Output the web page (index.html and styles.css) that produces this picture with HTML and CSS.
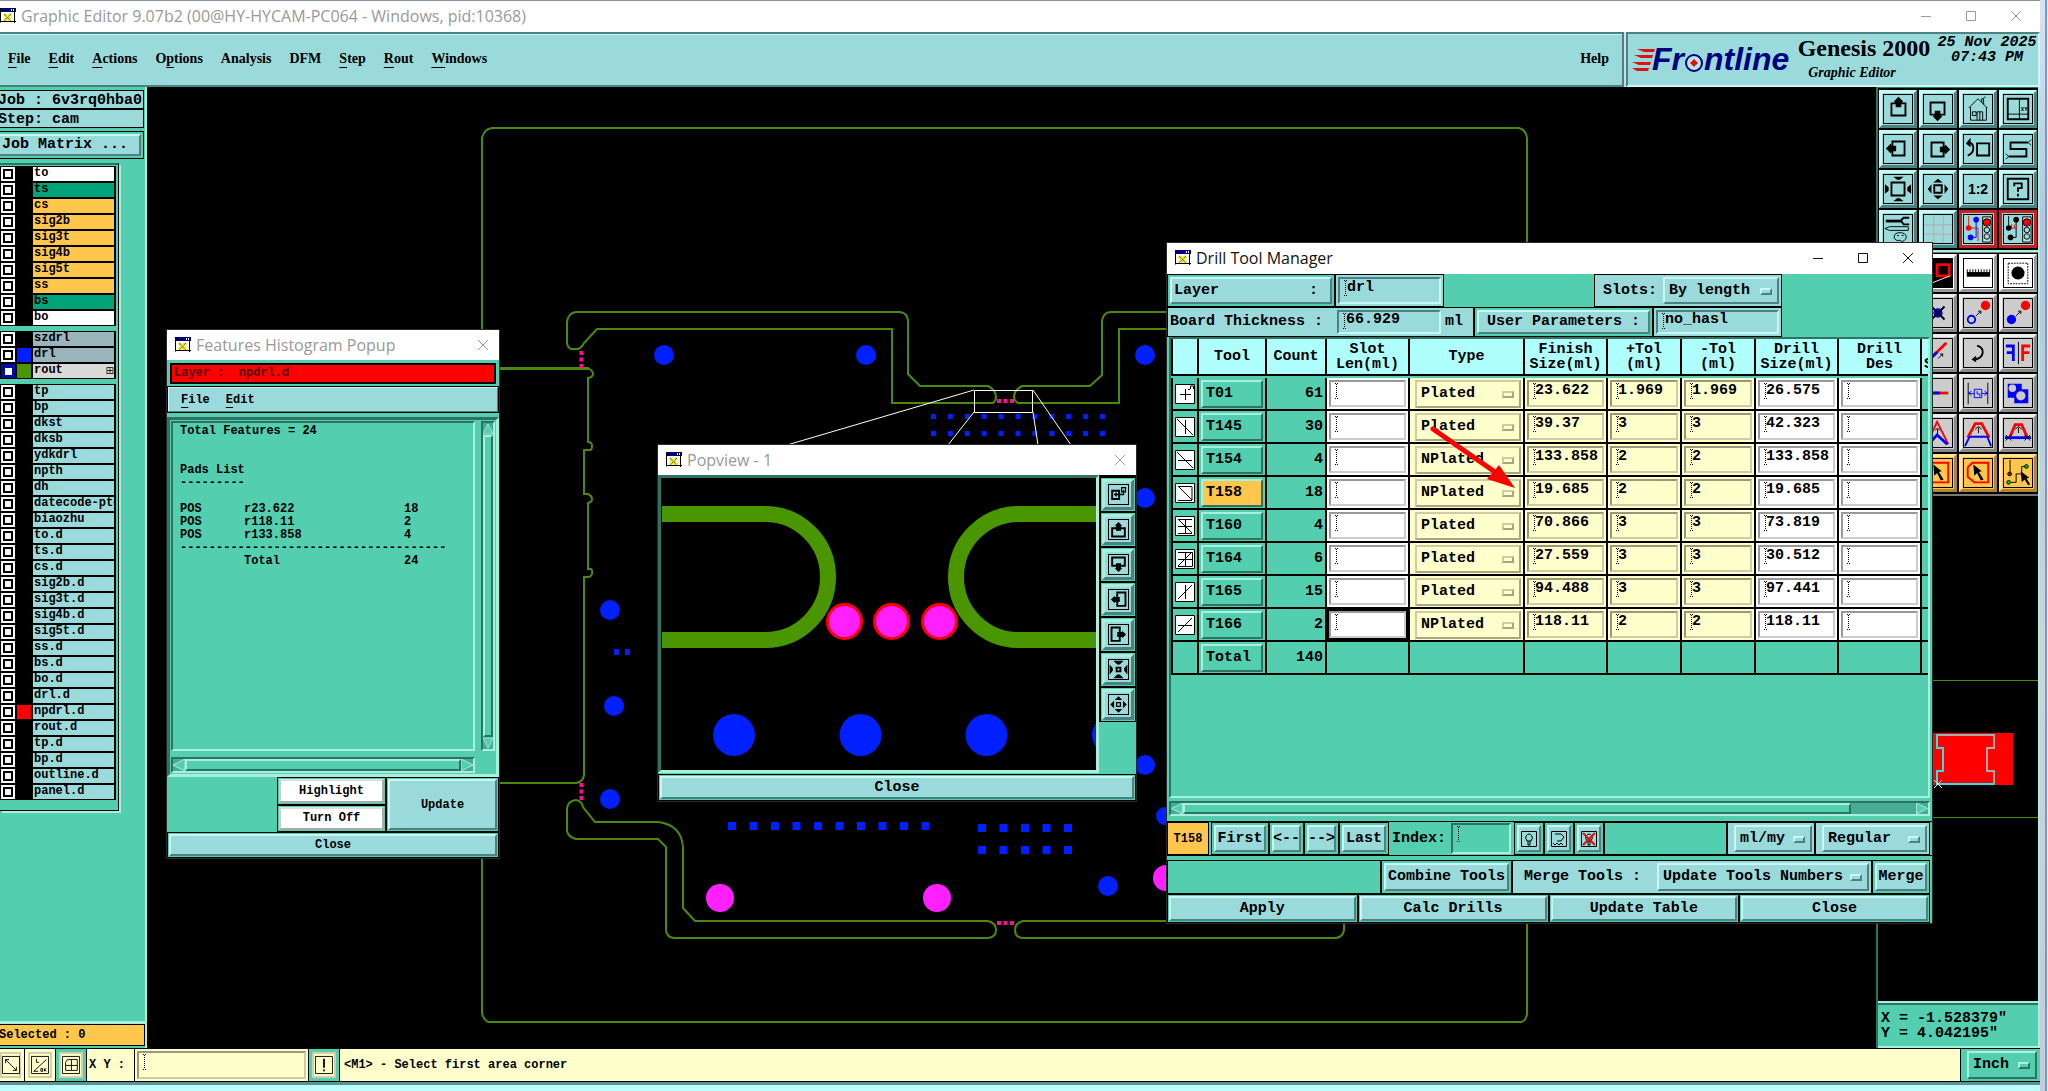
FILE: index.html
```html
<!DOCTYPE html>
<html lang="en">
<head>
<meta charset="utf-8">
<title>Graphic Editor 9.07b2</title>
<link rel="stylesheet" href="styles.css">
</head>
<body>
<svg class="defs" aria-hidden="true">
  <symbol id="win" viewBox="0 0 16 15"><path fill="#fff" d="M0 0h16v15H0z"/><path fill="#00007a" d="M0 0h16v4H0z"/><path d="M11 1h1v2h-1zM13 1h1v2h-1z" fill="#fff"/><path d="M4 6l7 7M11 6l-7 7" stroke="#e6e21a" stroke-width="3"/><path d="M4 6l7 7M11 6l-7 7" stroke="#444" stroke-dasharray="1 1"/><path d="M.5 0v14.500M14.500 0v15M0 13.500h16" fill="none" stroke="#000"/></symbol>
  <symbol id="x" viewBox="0 0 12 12"><path d="M1 1l10 10M11 1L1 11" stroke="currentColor" fill="none"/></symbol>
  <symbol id="min" viewBox="0 0 12 12"><path d="M1 6.500h10" stroke="currentColor"/></symbol>
  <symbol id="max" viewBox="0 0 12 12"><path d="M1.500 1.500h9v9h-9z" stroke="currentColor" fill="none"/></symbol>
  <symbol id="up" viewBox="0 0 30 30"><path d="M8 9h15v13H8z" fill="none" stroke="#000" stroke-width="2"/><path d="M15.500 2l5 5-1 1h-1v5h-6V8h-1l-1-1z"/></symbol>
  <symbol id="in4" viewBox="0 0 30 30"><path d="M10 2h11l-4 3h-3zM10 28h11l-4-3h-3zM1 10v10l4-3v-4zM29 10v10l-4-3v-4z"/></symbol>
  <symbol id="out4" viewBox="0 0 30 30"><path d="M15 4l5 4H10zM15 26l5-4H10zM4 15l4-5v10zM26 15l-4-5v10z"/></symbol>
  <symbol id="light" viewBox="0 0 30 30"><path d="M20 2h9v27h-9z" fill="#b8e4e4" stroke="#000"/><circle cx="24.500" cy="8" r="4" fill="#f00" stroke="#000"/><circle cx="24.500" cy="16" r="3" fill="#9bdada" stroke="#000"/><circle cx="24.500" cy="23" r="3" fill="#9bdada" stroke="#000"/></symbol>
  <symbol id="cur" viewBox="0 0 30 30"><path d="M10 6l9 7-3 1 5 8-3 1-4-8-3 3z"/></symbol>
</svg>

<header class="titlebar">
  <svg class="wi"><use href="#win"/></svg>
  <h1>Graphic Editor 9.07b2 (00@HY-HYCAM-PC064 - Windows, pid:10368)</h1>
  <div class="winctl"><button aria-label="Minimize"><svg><use href="#min"/></svg></button><button aria-label="Maximize"><svg><use href="#max"/></svg></button><button aria-label="Close window"><svg><use href="#x"/></svg></button></div>
</header>

<div class="top">
  <nav class="menubar">
    <a href="#"><u>F</u>ile</a><a href="#"><u>E</u>dit</a><a href="#"><u>A</u>ctions</a><a href="#">O<u>p</u>tions</a><a href="#">Analysis</a><a href="#">DFM</a><a href="#"><u>S</u>tep</a><a href="#"><u>R</u>out</a><a href="#"><u>W</u>indows</a>
    <a href="#" class="help">Help</a>
  </nav>
  <div class="brand">
    <svg class="logo" viewBox="0 0 164 34" role="img" aria-label="Frontline">
      <path d="M5 8h18l-1 3H12zM2 14h19l-1 3H9zM0 21h19l-1 3H7zM0 27h17l-1 3H5z" fill="#e01010"/>
      <text x="20" y="29" class="ft">Fr</text><text x="72" y="29" class="ft">ntline</text>
      <circle cx="62" cy="22" r="8" fill="#b4e8ea" stroke="#000080" stroke-width="2"/><path d="M62 18l4 4-4 4-4-4z" fill="#e01010"/>
    </svg>
    <div class="product"><strong>Genesis 2000</strong><em>Graphic Editor</em></div>
    <div class="clock">25 Nov 2025<br>07:43 PM</div>
  </div>
</div>

<main class="work">
  <aside class="left">
    <div class="job">Job : 6v3rq0hba0</div>
    <div class="job">Step: cam</div>
    <div class="jm"><button class="btn">Job Matrix ...</button></div>
    <div class="layers">
      <ul>
        <li class="w"><i></i><b></b><span>to</span></li><li class="g"><i></i><b></b><span>ts</span></li><li class="o"><i></i><b></b><span>cs</span></li><li class="o"><i></i><b></b><span>sig2b</span></li><li class="o"><i></i><b></b><span>sig3t</span></li><li class="o"><i></i><b></b><span>sig4b</span></li><li class="o"><i></i><b></b><span>sig5t</span></li><li class="o"><i></i><b></b><span>ss</span></li><li class="g"><i></i><b></b><span>bs</span></li><li class="w"><i></i><b></b><span>bo</span></li>
      </ul>
      <ul>
        <li class="s"><i></i><b></b><span>szdrl</span></li><li class="s"><i></i><b class="blue"></b><span>drl</span></li><li class="l"><i class="act"></i><b class="green"></b><span>rout<small>⊞</small></span></li>
      </ul>
      <ul>
        <li><i></i><b></b><span>tp</span></li><li><i></i><b></b><span>bp</span></li><li><i></i><b></b><span>dkst</span></li><li><i></i><b></b><span>dksb</span></li><li><i></i><b></b><span>ydkdrl</span></li><li><i></i><b></b><span>npth</span></li><li><i></i><b></b><span>dh</span></li><li><i></i><b></b><span>datecode-ptd</span></li><li><i></i><b></b><span>biaozhu</span></li><li><i></i><b></b><span>to.d</span></li><li><i></i><b></b><span>ts.d</span></li><li><i></i><b></b><span>cs.d</span></li><li><i></i><b></b><span>sig2b.d</span></li><li><i></i><b></b><span>sig3t.d</span></li><li><i></i><b></b><span>sig4b.d</span></li><li><i></i><b></b><span>sig5t.d</span></li><li><i></i><b></b><span>ss.d</span></li><li><i></i><b></b><span>bs.d</span></li><li><i></i><b></b><span>bo.d</span></li><li><i></i><b></b><span>drl.d</span></li><li><i></i><b class="red"></b><span>npdrl.d</span></li><li><i></i><b></b><span>rout.d</span></li><li><i></i><b></b><span>tp.d</span></li><li><i></i><b></b><span>bp.d</span></li><li><i></i><b></b><span>outline.d</span></li><li><i></i><b></b><span>panel.d</span></li>
      </ul>
    </div>
    <div class="selected">Selected : 0</div>
  </aside>

  <svg class="canvas" role="img" aria-label="Board drawing">
    <g transform="translate(-147 -87)">
      <g fill="none" stroke="#4a8a10" stroke-width="2">
        <path d="M482 138q2-9 10-10H1519q7 2 8 10V1014q-1 7-6 8H488q-5-3-6-9z"/>
        <path d="M567 342V322q1-9 9-10H900q7 1 8 8v54l12 12h68q8 4 8 11 0 4-3 6H892V329H597l-13 14q-3 6-7 6h-6q-4-2-4-7z"/>
        <path d="M1170 312h-60q-7 1-8 9v54l-12 11h-68q-8 4-8 11 0 4 4 6h101v-74h51"/>
        <path d="M588 368q5 3 5 6t-5 4v64q4 0 4 4t-2 4h-6v44h4q4 2 4 5t-4 4v66h3q2 2 1 5t-4 3h-4V775q-1 7-8 8h-76"/>
        <path d="M567 808q1-7 9-8 6 1 7 7l12 15h63q24 3 25 26v60l12 13h293q8 2 8 9t-8 8H674q-7-1-8-7v-84l-8-8h-82q-8-2-9-8z"/>
        <path d="M1170 921h-147q-8 2-8 9t7 8h314q7-1 8-8v-10"/>
        <path d="M495 368.500h94" stroke-width="3"/>
      </g>
      <g fill="#0020ff">
        <circle cx="664" cy="355" r="10"/><circle cx="866" cy="355" r="10"/><circle cx="1145" cy="355" r="10"/><circle cx="610" cy="610" r="10"/><circle cx="614" cy="706" r="10"/><circle cx="610" cy="799" r="10"/><circle cx="1145" cy="498" r="10"/><circle cx="1145" cy="765" r="10"/><circle cx="1165" cy="816" r="9"/><circle cx="1108" cy="886" r="10"/>
        <path d="M614 649h5v6h-5zM625 649h5v6h-5z"/>
      </g>
      <g stroke="#0020ff" fill="none">
        <path stroke-width="5" stroke-dasharray="5 11.900" d="M931 416.500h175M931 433.500h175"/>
        <path stroke-width="8" stroke-dasharray="8 13.500" d="M728 826h202"/>
        <path stroke-width="8" stroke-dasharray="8 13.500" d="M978 828h95M978 850h95"/>
      </g>
      <g fill="#ff20ff"><circle cx="720" cy="898" r="14"/><circle cx="937" cy="898" r="14"/><circle cx="1166" cy="878" r="13"/></g>
      <g fill="none" stroke="#ff1090" stroke-width="4" stroke-dasharray="4 2.500"><path d="M581.500 351v17M581.500 783v17M997 401h17M997 923h17"/></g>
      <g fill="none" stroke="#fff"><path d="M974.500 390.500h58v22h-58z"/><path d="M974 390L787 445M974 412l-26 33M1033 412l5 33M1033 390l38 55"/></g>
    </g>
  </svg>

  <aside class="right">
    <div class="tools view">
      <button aria-label="Pan up"><svg viewBox="0 0 30 30"><use href="#up"/></svg></button>
      <button aria-label="Pan down"><svg viewBox="0 0 30 30"><use href="#up" transform="rotate(180 15 15)"/></svg></button>
      <button aria-label="Home"><svg viewBox="0 0 30 30"><path d="M5 14L15 4l10 10M7 13v14h17V13M14 27v-9h6v9M17 18v9M9 18h4v4H9zM19 8V4h2v6M21 3l2-1" fill="none" stroke="#000"/></svg></button>
      <button aria-label="Coordinates"><svg viewBox="0 0 30 30"><path d="M4 4h22v22H4z" fill="none" stroke="#000" stroke-width="2"/><path d="M16.500 4v22M4 20.500h22" stroke="#000"/><text x="18" y="17" class="tiny">XY</text></svg></button>
      <button aria-label="Pan left"><svg viewBox="0 0 30 30"><use href="#up" transform="rotate(-90 15 15)"/></svg></button>
      <button aria-label="Pan right"><svg viewBox="0 0 30 30"><use href="#up" transform="rotate(90 15 15)"/></svg></button>
      <button aria-label="Previous view"><svg viewBox="0 0 30 30"><path d="M14 9h13v13H14zM4 8q6 0 6 6t-6 8" fill="none" stroke="#000" stroke-width="2"/><path d="M2 9l5-6v10z"/></svg></button>
      <button aria-label="Serpentine"><svg viewBox="0 0 30 30"><path d="M26 8H7v7h17v8H5" fill="none" stroke="#000" stroke-width="2"/><path d="M29 5l-3 3 3 3M2 20l3 3-3 3" fill="none" stroke="#000"/></svg></button>
      <button aria-label="Zoom in"><svg viewBox="0 0 30 30"><use href="#in4"/><path d="M8 8h14v14H8z" fill="none" stroke="#000" stroke-width="2"/></svg></button>
      <button aria-label="Zoom out"><svg viewBox="0 0 30 30"><use href="#out4"/><path d="M11 11h8v8h-8z" fill="none" stroke="#000" stroke-width="2"/></svg></button>
      <button class="ratio"><span>1:2</span></button>
      <button aria-label="Help on view"><svg viewBox="0 0 30 30"><path d="M4 4h22v22H4z" fill="none" stroke="#000" stroke-width="2"/><path d="M11 12V9h8v5h-4v4M15 20v3" fill="none" stroke="#000" stroke-width="2"/></svg></button>
      <button aria-label="Setup"><svg viewBox="0 0 30 30"><path d="M2 5h16v3H2z"/><path d="M27 3h-6l-3 3 3 4h6" fill="none" stroke="#000" stroke-width="2"/><path d="M6 12.500h20v4H6l-5-2z" fill="none" stroke="#000"/><path d="M11 25q-1-7 8-6 7 2 4 7-3 4-6 1-3 2-6-2zM14 22h2M19 22h2" fill="none" stroke="#000"/></svg></button>
      <button aria-label="Grid"><svg viewBox="0 0 30 30"><path d="M10.500 0v30M20.500 0v30M0 10.500h30M0 20.500h30" stroke="#c4a4a8"/></svg></button>
      <button class="hot" aria-label="Net on"><svg viewBox="0 0 30 30"><use href="#light"/><path d="M5 1v13h10v14" fill="none" stroke="#f00"/><path d="M13 4v20H7" fill="none" stroke="#00f"/><circle cx="5" cy="14" r="3" fill="#f00"/><g fill="#00f"><circle cx="13" cy="5" r="3"/><circle cx="7" cy="24" r="3"/></g></svg></button>
      <button class="hot" aria-label="Net off"><svg viewBox="0 0 30 30"><use href="#light"/><path d="M5 1v13M13 4v20H7" fill="none" stroke="#000"/><path d="M6 14h8M8 10v4M11 10v4" stroke="#f00"/><circle cx="5" cy="14" r="3"/><circle cx="13" cy="5" r="3"/><circle cx="7" cy="24" r="3"/></svg></button>
    </div>
    <div class="tools edit">
      <button class="white"></button>
      <button class="white" aria-label="Contrast"><svg viewBox="0 0 30 30"><path d="M0 0h30v30H0z"/><path d="M14 6h13v12H14z" fill="none" stroke="#f00" stroke-width="3"/><path d="M0 29l28-11" stroke="#fff"/><path d="M0 18h5v12H0z" fill="#00f"/></svg></button>
      <button class="white" aria-label="Ruler"><svg viewBox="0 0 30 30"><path d="M3 14h25v5H3z"/><path d="M3.500 11v4M6.500 11v4M9.500 11v4M12.500 11v4M15.500 11v4M18.500 11v4M21.500 11v4M24.500 11v4M27.500 11v4" stroke="#000"/></svg></button>
      <button class="white" aria-label="Select pad"><svg viewBox="0 0 30 30"><path d="M4.500 4.500h21v22h-21z" fill="none" stroke="#000" stroke-dasharray="2 1"/><circle cx="15" cy="15" r="7"/></svg></button>
      <button></button>
      <button aria-label="Delete"><svg viewBox="0 0 30 30"><circle cx="15" cy="15" r="5" fill="#00f"/><path d="M8 8l14 14M22 8L8 22" stroke="#000" stroke-width="2"/></svg></button>
      <button aria-label="Copy"><svg viewBox="0 0 30 30"><circle cx="8" cy="22" r="4" fill="none" stroke="#00f" stroke-width="2"/><circle cx="23" cy="7" r="5" fill="#f00"/><path d="M13 18l5-5M15 13h3v3" fill="none" stroke="#000"/></svg></button>
      <button aria-label="Move"><svg viewBox="0 0 30 30"><circle cx="8" cy="22" r="5" fill="#00f"/><circle cx="23" cy="7" r="5" fill="#f00"/><path d="M13 18l5-5M15 13h3v3" fill="none" stroke="#000"/></svg></button>
      <button></button>
      <button aria-label="Stretch"><svg viewBox="0 0 30 30"><path d="M10 18L24 4" stroke="#f00" stroke-width="3"/><path d="M4 24l10-10" stroke="#00f" stroke-width="3"/><path d="M15 21l5-5M17 16h3v3" fill="none" stroke="#000"/></svg></button>
      <button aria-label="Rotate"><svg viewBox="0 0 30 30"><path d="M14 7q7 2 6 8t-9 7" fill="none" stroke="#000" stroke-width="2"/><path d="M8 22l5-4v7z"/></svg></button>
      <button aria-label="Mirror"><svg viewBox="0 0 30 30"><path d="M2 7.500h8v16M3 14.500h7" fill="none" stroke="#00f" stroke-width="3"/><path d="M28 7.500h-8v16M27 14.500h-7" fill="none" stroke="#f00" stroke-width="3"/><path d="M15.500 3v24" stroke="#000"/></svg></button>
      <button></button>
      <button aria-label="Break line"><svg viewBox="0 0 30 30"><path d="M2 15h24" stroke="#f00" stroke-width="3"/><path d="M9 15h8" stroke="#00f" stroke-width="3"/></svg></button>
      <button aria-label="Spacing"><svg viewBox="0 0 30 30"><path d="M4.500 4v23M25.500 4v23" stroke="#000"/><path d="M11 11h8v9h-8zM5 15.500h6M19 15.500h6M8 13l-3 2 3 3M22 13l3 2-3 3M14 13v3h3v3" fill="none" stroke="#00f"/></svg></button>
      <button aria-label="Merge shapes"><svg viewBox="0 0 30 30"><path d="M4 5h15v6h7v15H11v-6H4z" fill="#00f"/><circle cx="9" cy="10" r="4" fill="#ccc"/><circle cx="18" cy="18" r="5" fill="#ccc"/></svg></button>
      <button></button>
      <button aria-label="Peak"><svg viewBox="0 0 30 30"><path d="M3 27L14 3l12 24" fill="none" stroke="#f00" stroke-width="2"/><path d="M5 27l9-10 11 10" fill="none" stroke="#00f" stroke-width="3"/><path d="M14.500 16v-5M12 12l2.500-2 2.500 2" fill="none" stroke="#000"/></svg></button>
      <button aria-label="Raise trace"><svg viewBox="0 0 30 30"><path d="M4 20L12 5h7l8 15" fill="none" stroke="#f00" stroke-width="3"/><path d="M1 29l5-10h19l4 10" fill="none" stroke="#00f" stroke-width="2"/><path d="M15.500 15v-6M12 11l3.500-3 3.500 3" fill="none" stroke="#000"/></svg></button>
      <button aria-label="Cut trace"><svg viewBox="0 0 30 30"><path d="M6 20l6-14h7l6 14" fill="none" stroke="#f00" stroke-width="3"/><path d="M1 20h28" stroke="#00f" stroke-width="3"/><path d="M2 17l6 6M8 17l-6 6M22 17l6 6M28 17l-6 6M15.500 15v-6M12 11l3.500-3 3.500 3" fill="none" stroke="#000"/></svg></button>
      <button class="amber"></button>
      <button class="amber" aria-label="Select rectangle"><svg viewBox="0 0 30 30"><path d="M4 4h22v21H4z" fill="none" stroke="#f00" stroke-width="2"/><use href="#cur"/></svg></button>
      <button class="amber" aria-label="Select polygon"><svg viewBox="0 0 30 30"><path d="M9 4h17v21H11L4 19V9z" fill="none" stroke="#f00" stroke-width="2"/><use href="#cur"/></svg></button>
      <button class="amber" aria-label="Select net"><svg viewBox="0 0 30 30"><path d="M6.500 1v14M6 25h7v-9h6V8h5" fill="none" stroke="#000"/><circle cx="6" cy="16" r="2" fill="#c00" stroke="#000"/><circle cx="5" cy="25" r="2" fill="#0c0" stroke="#000"/><circle cx="24" cy="8" r="2" fill="#0c0" stroke="#000"/><path d="M18 13l9 7-3 1 4 6-2 1-4-6-3 3z"/></svg></button>
    </div>
    <svg class="preview" role="img" aria-label="Panel overview">
      <path d="M0 184.500h162M0 321.500h162" stroke="#4a8a10" fill="none"/>
      <path d="M30 237h105v52H30z" fill="#f00"/>
      <path d="M59 239h57v13h-7v23h7v13H59v-13h6v-23h-6z" fill="none" stroke="#30e0e0" stroke-width="2"/>
      <path d="M61 239h55v13h-7v23h7v12" fill="none" stroke="#aaa" stroke-width="2"/>
      <path d="M56 284l8 8M64 284l-8 8" stroke="#fff"/>
    </svg>
    <div class="coords">X = -1.528379"<br>Y = 4.042195"</div>
  </aside>
</main>

<footer class="status">
  <button class="sb" aria-label="Absolute"><svg viewBox="0 0 20 20"><path d="M.5.500h19v19H.5zM4 4l12 12M4 8V4h4M16 12v4h-4" fill="none" stroke="#000"/></svg></button>
  <button class="sb" aria-label="Angle"><svg viewBox="0 0 20 20"><path d="M.5.500h19v19H.5zM17 4L3 17h5M6 3v4h3M11 14h2v3h-2zM15 14v3M17 14l-2 1 2 2" fill="none" stroke="#000"/></svg></button>
  <button class="sb on" aria-label="Snap grid"><svg viewBox="0 0 20 20"><path d="M.5.500h19v19H.5zM6 4h11v12H4V7zM10.500 4v12M4 10.500h13" fill="none" stroke="#000"/></svg></button>
  <label class="xy" for="xy">X Y :</label>
  <div class="xyin"><span class="field"><input id="xy" class="beam"></span></div>
  <button class="sb on" aria-label="Alert"><svg viewBox="0 0 20 20"><path d="M.5.500h19v19H.5z" fill="none" stroke="#000"/><path d="M10 3v10M10 15v2" stroke="#000" stroke-width="2"/></svg></button>
  <output class="msg">&lt;M1&gt; - Select first area corner</output>
  <div class="unit"><span class="sel"><select aria-label="Unit"><option>Inch</option></select></span></div>
</footer>
<div class="strip"></div>

<section class="window hist">
  <header><svg class="wi"><use href="#win"/></svg><h2>Features Histogram Popup</h2><button aria-label="Close window"><svg><use href="#x"/></svg></button></header>
  <div class="layerbar">Layer :&nbsp; npdrl.d</div>
  <nav class="hmenu"><a href="#"><u>F</u>ile</a><a href="#"><u>E</u>dit</a></nav>
  <div class="report">
    <div class="text">
      <p>Total Features = 24</p><p></p><p></p><p>Pads List</p><p>---------</p><p></p>
      <p class="r"><span>POS</span><span>r23.622</span><span>18</span></p>
      <p class="r"><span>POS</span><span>r118.11</span><span>2</span></p>
      <p class="r"><span>POS</span><span>r133.858</span><span>4</span></p>
      <p>-------------------------------------</p>
      <p class="r"><span></span><span>Total</span><span>24</span></p>
    </div>
    <div class="vs"><svg viewBox="0 0 12 12"><path d="M6 0l6 12H0z"/></svg><i></i><svg viewBox="0 0 12 12"><path d="M0 0h12L6 12z"/></svg></div>
    <div class="hs"><svg viewBox="0 0 12 12"><path d="M12 0v12L0 6z"/></svg><i></i><svg viewBox="0 0 12 12"><path d="M0 0l12 6L0 12z"/></svg></div>
  </div>
  <div class="hbtns">
    <div class="cell"><button class="btn white">Highlight</button></div>
    <div class="cell upd"><button class="btn">Update</button></div>
    <div class="cell"><button class="btn white">Turn Off</button></div>
  </div>
  <div class="cell close"><button class="btn">Close</button></div>
</section>

<section class="window pop">
  <header><svg class="wi"><use href="#win"/></svg><h2>Popview - 1</h2><button aria-label="Close window"><svg><use href="#x"/></svg></button></header>
  <div class="popbody">
    <svg class="popcanvas" role="img" aria-label="Magnified board area"><g transform="translate(-661 -478)">
      <g fill="none" stroke="#4a9600" stroke-width="16"><path d="M662 514H765A63 63 0 0 1 765 640H662M1096 514H1019A63 63 0 0 0 1019 640H1096"/></g>
      <g fill="#ff20ff" stroke="#f00" stroke-width="3"><circle cx="844.500" cy="621.500" r="17"/><circle cx="891.500" cy="621.500" r="17"/><circle cx="939.500" cy="621.500" r="17"/></g>
      <g fill="#0020ff"><circle cx="734" cy="735" r="21"/><circle cx="860.500" cy="735" r="21"/><circle cx="986.500" cy="735" r="21"/><circle cx="1113" cy="735" r="21"/></g>
    </g></svg>
    <div class="poptools">
      <button aria-label="Pick area"><svg viewBox="0 0 30 30"><path d="M5 9h11v13H5z" fill="none" stroke="#000" stroke-width="3"/><path d="M20 4h6v7h-6zM23 8v7H9M12 12l-3 3 3 3" fill="none" stroke="#000" stroke-width="2"/></svg></button>
      <button aria-label="Pan up"><svg viewBox="0 0 30 30"><path d="M5 13h20v13H5z" fill="none" stroke="#000" stroke-width="3"/><path d="M15 3l6 6h-2v8h-8V9H9z"/></svg></button>
      <button aria-label="Pan down"><svg viewBox="0 0 30 30"><path d="M5 4h20v13H5z" fill="none" stroke="#000" stroke-width="3"/><path d="M15 27l6-6h-2v-8h-8v8H9z"/></svg></button>
      <button aria-label="Pan left"><svg viewBox="0 0 30 30"><path d="M13 4h13v21H13z" fill="none" stroke="#000" stroke-width="3"/><path d="M3 15l6-6v2h8v8H9v2z"/></svg></button>
      <button aria-label="Pan right"><svg viewBox="0 0 30 30"><path d="M4 4h13v21H4z" fill="none" stroke="#000" stroke-width="3"/><path d="M27 15l-6-6v2h-8v8h8v2z"/></svg></button>
      <button aria-label="Zoom in"><svg viewBox="0 0 30 30"><path d="M7 1h16l-6 6h-4zM7 29h16l-6-6h-4zM1 7v16l5-6v-4zM29 7v16l-5-6v-4z"/><path d="M12 12h6v6h-6z" fill="none" stroke="#000" stroke-width="3"/></svg></button>
      <button aria-label="Zoom out"><svg viewBox="0 0 30 30"><path d="M15 2l6 6H9zM15 28l6-6H9zM2 15l6-6v12zM28 15l-6-6v12z"/><path d="M12 12h6v6h-6z" fill="none" stroke="#000" stroke-width="2"/></svg></button>
    </div>
  </div>
  <div class="cell close"><button class="btn">Close</button></div>
</section>

<section class="window drill">
  <header><svg class="wi"><use href="#win"/></svg><h2>Drill Tool Manager</h2><button aria-label="Minimize"><svg><use href="#min"/></svg></button><button aria-label="Maximize"><svg><use href="#max"/></svg></button><button aria-label="Close window"><svg><use href="#x"/></svg></button></header>
  <div class="drow r1">
    <div class="cell w168"><button class="btn spread"><span>Layer</span><span>:</span></button></div>
    <div class="cell aq w109"><span class="field aqf"><input class="beam" aria-label="Layer" value="drl"></span></div>
    <div class="fill"></div>
    <div class="cell aq slots"><label for="slots">Slots:</label><span class="sel aqs"><select id="slots"><option>By length</option></select></span></div>
    <div class="tail"></div>
  </div>
  <div class="drow r2">
    <div class="cell aq board"><label for="thick">Board Thickness :</label><span class="field aqf"><input id="thick" class="beam" value="66.929"></span><span>ml</span></div>
    <div class="cell params"><button class="btn">User Parameters :</button></div>
    <div class="cell aq hasl"><span class="field aqf"><input class="beam" aria-label="User parameters" value="no_hasl"></span></div>
    <div class="tail"></div>
  </div>
  <div class="tframe">
    <table>
      <colgroup><col class="c1"><col class="c2"><col class="c3"><col class="c4"><col class="c5"><col class="c6"><col class="c7"><col class="c7"><col class="c6"><col class="c6"><col class="c8"></colgroup>
      <thead><tr><th></th><th>Tool</th><th>Count</th><th>Slot<br>Len(ml)</th><th>Type</th><th>Finish<br>Size(ml)</th><th>+Tol<br>(ml)</th><th>-Tol<br>(ml)</th><th>Drill<br>Size(ml)</th><th>Drill<br>Des</th><th class="cut">&nbsp;<br>S</th></tr></thead>
      <tbody>
        <tr><td><svg class="ti" viewBox="0 0 20 20"><path d="M.5.500h19v19H.5zM10.500 5v11M5 10.500h11M15.500 5V2h3v3M13 5.500h2"/></svg></td><td><button class="tool">T01</button></td><td class="n">61</td><td class="w"><input class="beam" aria-label="Slot length T01"></td><td class="y"><span class="sel ys"><select aria-label="Type T01"><option>Plated</option></select></span></td><td class="y"><input class="beam" aria-label="Finish T01" value="23.622"></td><td class="y"><input class="beam" aria-label="Plus T01" value="1.969"></td><td class="y"><input class="beam" aria-label="Minus T01" value="1.969"></td><td class="w"><input class="beam" aria-label="Drill T01" value="26.575"></td><td class="w"><input class="beam" aria-label="Des T01"></td><td></td></tr>
        <tr><td><svg class="ti" viewBox="0 0 20 20"><path d="M.5.500h19v19H.5zM10.500 3v14M2 2l16 16"/></svg></td><td><button class="tool">T145</button></td><td class="n">30</td><td class="w"><input class="beam" aria-label="Slot length T145"></td><td class="y"><span class="sel ys"><select aria-label="Type T145"><option>Plated</option></select></span></td><td class="y"><input class="beam" aria-label="Finish T145" value="39.37"></td><td class="y"><input class="beam" aria-label="Plus T145" value="3"></td><td class="y"><input class="beam" aria-label="Minus T145" value="3"></td><td class="w"><input class="beam" aria-label="Drill T145" value="42.323"></td><td class="w"><input class="beam" aria-label="Des T145"></td><td></td></tr>
        <tr><td><svg class="ti" viewBox="0 0 20 20"><path d="M.5.500h19v19H.5zM3 10.500h14M2 2l16 16"/></svg></td><td><button class="tool">T154</button></td><td class="n">4</td><td class="w"><input class="beam" aria-label="Slot length T154"></td><td class="y"><span class="sel ys"><select aria-label="Type T154"><option>NPlated</option></select></span></td><td class="y"><input class="beam" aria-label="Finish T154" value="133.858"></td><td class="y"><input class="beam" aria-label="Plus T154" value="2"></td><td class="y"><input class="beam" aria-label="Minus T154" value="2"></td><td class="w"><input class="beam" aria-label="Drill T154" value="133.858"></td><td class="w"><input class="beam" aria-label="Des T154"></td><td></td></tr>
        <tr><td><svg class="ti" viewBox="0 0 20 20"><path d="M.5.500h19v19H.5zM3 3l14 14V3.500H3M3 17.500h14"/></svg></td><td><button class="tool picked">T158</button></td><td class="n">18</td><td class="w"><input class="beam" aria-label="Slot length T158"></td><td class="y"><span class="sel ys"><select aria-label="Type T158"><option>NPlated</option></select></span></td><td class="y"><input class="beam" aria-label="Finish T158" value="19.685"></td><td class="y"><input class="beam" aria-label="Plus T158" value="2"></td><td class="y"><input class="beam" aria-label="Minus T158" value="2"></td><td class="w"><input class="beam" aria-label="Drill T158" value="19.685"></td><td class="w"><input class="beam" aria-label="Des T158"></td><td></td></tr>
        <tr><td><svg class="ti" viewBox="0 0 20 20"><path d="M.5.500h19v19H.5zM3 3.500h14M3 17.500h14M10.500 3v14M3 10.500h14M3 3l14 14"/></svg></td><td><button class="tool">T160</button></td><td class="n">4</td><td class="w"><input class="beam" aria-label="Slot length T160"></td><td class="y"><span class="sel ys"><select aria-label="Type T160"><option>Plated</option></select></span></td><td class="y"><input class="beam" aria-label="Finish T160" value="70.866"></td><td class="y"><input class="beam" aria-label="Plus T160" value="3"></td><td class="y"><input class="beam" aria-label="Minus T160" value="3"></td><td class="w"><input class="beam" aria-label="Drill T160" value="73.819"></td><td class="w"><input class="beam" aria-label="Des T160"></td><td></td></tr>
        <tr><td><svg class="ti" viewBox="0 0 20 20"><path d="M.5.500h19v19H.5zM3 3.500h14.500v14H3M10.500 3v14M3 10.500h14M17 3L3 17"/></svg></td><td><button class="tool">T164</button></td><td class="n">6</td><td class="w"><input class="beam" aria-label="Slot length T164"></td><td class="y"><span class="sel ys"><select aria-label="Type T164"><option>Plated</option></select></span></td><td class="y"><input class="beam" aria-label="Finish T164" value="27.559"></td><td class="y"><input class="beam" aria-label="Plus T164" value="3"></td><td class="y"><input class="beam" aria-label="Minus T164" value="3"></td><td class="w"><input class="beam" aria-label="Drill T164" value="30.512"></td><td class="w"><input class="beam" aria-label="Des T164"></td><td></td></tr>
        <tr><td><svg class="ti" viewBox="0 0 20 20"><path d="M.5.500h19v19H.5zM10.500 3v14M17 3L3 17"/></svg></td><td><button class="tool">T165</button></td><td class="n">15</td><td class="w"><input class="beam" aria-label="Slot length T165"></td><td class="y"><span class="sel ys"><select aria-label="Type T165"><option>Plated</option></select></span></td><td class="y"><input class="beam" aria-label="Finish T165" value="94.488"></td><td class="y"><input class="beam" aria-label="Plus T165" value="3"></td><td class="y"><input class="beam" aria-label="Minus T165" value="3"></td><td class="w"><input class="beam" aria-label="Drill T165" value="97.441"></td><td class="w"><input class="beam" aria-label="Des T165"></td><td></td></tr>
        <tr><td><svg class="ti" viewBox="0 0 20 20"><path d="M.5.500h19v19H.5zM3 10.500h14M17 3L3 17"/></svg></td><td><button class="tool">T166</button></td><td class="n">2</td><td class="w foc"><input class="beam" aria-label="Slot length T166"></td><td class="y"><span class="sel ys"><select aria-label="Type T166"><option>NPlated</option></select></span></td><td class="y"><input class="beam" aria-label="Finish T166" value="118.11"></td><td class="y"><input class="beam" aria-label="Plus T166" value="2"></td><td class="y"><input class="beam" aria-label="Minus T166" value="2"></td><td class="w"><input class="beam" aria-label="Drill T166" value="118.11"></td><td class="w"><input class="beam" aria-label="Des T166"></td><td></td></tr>
        <tr><td></td><td><button class="tool">Total</button></td><td class="n">140</td><td></td><td></td><td></td><td></td><td></td><td></td><td></td><td></td></tr>
      </tbody>
    </table>
    <svg class="arrow" viewBox="0 0 86 64"><path d="M4 4l62 43" stroke="#f00" stroke-width="5" stroke-linecap="round"/><path d="M86 63l-28-9 12-14z" fill="#f00"/></svg>
  </div>
  <div class="hs dhs"><svg viewBox="0 0 12 12"><path d="M12 0v12L0 6z"/></svg><i></i><svg viewBox="0 0 12 12"><path d="M0 0l12 6L0 12z"/></svg></div>
  <div class="drow r3">
    <div class="cur">T158</div>
    <div class="cell w58"><button class="btn">First</button></div><div class="cell w35"><button class="btn">&lt;--</button></div><div class="cell w35"><button class="btn">--&gt;</button></div><div class="cell w50"><button class="btn">Last</button></div>
    <label for="idx">Index:</label><span class="field idx"><input id="idx" class="beam"></span>
    <div class="cell w30"><button class="btn" aria-label="Light on"><svg viewBox="0 0 16 16"><path d="M.5.500h15v15H.5zM6 10q-2-3-1-5 3-4 6 0 1 2-1 5zM7 10v4h2v-4"/></svg></button></div><div class="cell w30"><button class="btn" aria-label="Path"><svg viewBox="0 0 16 16"><path d="M.5.500h15v15H.5zM4 3h6l3 3-3 4H6M2 12l2 2 2-2 2 2 2-2 2 2"/></svg></button></div><div class="cell w30"><button class="btn" aria-label="Light off"><svg viewBox="0 0 16 16"><path d="M.5.500h15v15H.5zM6 10q-2-3-1-5 3-4 6 0 1 2-1 5zM7 10v4h2v-4"/><path d="M2 2l12 12M14 2L2 14" class="rx"/></svg></button></div>
    <div class="fill"></div>
    <div class="cell aq w88"><span class="sel aqs"><select aria-label="Units"><option>ml/my</option></select></span></div>
    <div class="cell aq w115"><span class="sel aqs"><select aria-label="Mode"><option>Regular</option></select></span></div>
  </div>
  <div class="drow r4">
    <div class="fill"></div>
    <div class="cell w131"><button class="btn">Combine Tools</button></div>
    <div class="cell aq merge"><label for="mt">Merge Tools :</label><span class="sel aqs"><select id="mt"><option>Update Tools Numbers</option></select></span></div>
    <div class="cell w58"><button class="btn">Merge</button></div>
  </div>
  <div class="drow r5">
    <div class="cell"><button class="btn">Apply</button></div><div class="cell"><button class="btn">Calc Drills</button></div><div class="cell"><button class="btn">Update Table</button></div><div class="cell"><button class="btn">Close</button></div>
  </div>
</section>
</body>
</html>
```
FILE: styles.css
```css
:root {
  --aqua: #9bdada; --aqua-l: #c8f8f5; --aqua-d: #4c8282;
  --teal: #53ceaf; --teal-l: #a8f0de; --teal-d: #2c7461;
  --cream: #ffffcc; --amber: #ffc64c;
  --mono: "Liberation Mono", monospace;
}
*, *::before, *::after { box-sizing: border-box; }
body {
  margin: 0; height: 100vh; display: flex; flex-direction: column; overflow: hidden; position: relative;
  padding-right: 8px; color: #000; font: bold 15px/16px var(--mono);
  background: linear-gradient(to right, #0000 0 5px, #7b98c8 5px 7px, #e4ecf8 7px) right / 8px 100% no-repeat, linear-gradient(#d8e4f4, #b4c6e0 20%, #cfd2d8 60%, #c4ccdc);
}
button, input, select { font: inherit; color: inherit; margin: 0; border-radius: 0; padding: 0; appearance: none; min-width: 0; outline: 0; }
a { color: inherit; text-decoration: none; }
u { text-underline-offset: 4px; }
h1, h2, p, ul { margin: 0; padding: 0; }
.defs { position: absolute; width: 0; height: 0; }

/* title bars */
.titlebar, .window > header { display: flex; align-items: center; background: #fff; color: #999; }
.titlebar { height: 32px; border-top: 1px solid #8a8f98; flex: none; padding: 0 2px 2px 0; }
h1, h2 { font: 16px/24px "Open Sans", "Noto Sans", sans-serif; flex: 1; white-space: nowrap; }
.wi { width: 16px; height: 15px; flex: none; }
.titlebar .wi { margin-right: 5px; }
.winctl { display: flex; }
.titlebar button, .window > header button { width: 45px; height: 28px; border: 0; background: none; display: grid; place-items: center; }
.titlebar button svg, .window > header button svg { width: 12px; height: 12px; }

/* menu bar */
.top { display: flex; height: 55px; flex: none; }
.menubar, .brand { background: var(--aqua); border: 2px solid; border-color: var(--aqua-l) var(--aqua-d) var(--aqua-d) var(--aqua-l); }
.menubar { flex: 1; display: flex; align-items: center; gap: 18px; padding: 0 13px 2px 8px; font: bold 14px/18px "Liberation Serif", serif; border-left: 0; box-shadow: inset 0 1px var(--aqua-l); border-top-color: var(--aqua-d); }
.menubar .help { margin-left: auto; }
.brand { width: 414px; margin-left: 2px; display: flex; border-color: var(--aqua-d) var(--aqua-l) var(--aqua-l) var(--aqua-d); padding: 1px 0 0 4px; }
.logo { width: 164px; height: 34px; margin-top: 6px; flex: none; overflow: visible; }
.ft { font: italic bold 32px "Liberation Sans", sans-serif; fill: #000080; }
.product { width: 136px; flex: none; font: bold 24px/26px "Liberation Serif", serif; text-align: center; white-space: nowrap; }
.product strong { display: block; }
.product em { display: block; font-size: 14px; line-height: 24px; padding-right: 24px; }
.clock { flex: 1; font-style: italic; line-height: 15px; text-align: center; white-space: nowrap; padding-left: 4px; }

/* buttons, cells, fields */
.btn { width: 100%; height: 100%; background: var(--aqua); border: 2px solid; border-color: var(--aqua-l) var(--aqua-d) var(--aqua-d) var(--aqua-l); white-space: nowrap; display: flex; align-items: center; justify-content: center; }
.btn.white { background: #fff; border-color: #ddd #aaa #aaa #ccc; }
.cell { border: 1px solid #000; background: var(--teal); padding: 1px; flex: none; display: flex; align-items: center; }
.cell.aq { background: var(--aqua); }
.field { display: block; border: 2px solid; border-color: #99997a #cccca6 #cccca6 #99997a; }
.field input { display: block; width: 100%; height: 100%; border: 0; background-color: transparent; }
.beam { padding: 0 0 6px 7px; background: url("data:image/svg+xml,%3Csvg xmlns='http://www.w3.org/2000/svg' width='5' height='16'%3E%3Cpath d='M1 .5h1M3 .5h1M1 15.500h1M3 15.500h1M2.500 1v14' stroke='%23000' stroke-dasharray='1 1'/%3E%3C/svg%3E") 3px 1px no-repeat; }
.aqf { border-color: var(--aqua-d) var(--aqua-l) var(--aqua-l) var(--aqua-d); }
.sel { display: block; position: relative; border: 2px solid; border-color: var(--teal-l) var(--teal-d) var(--teal-d) var(--teal-l); }
.sel select { display: block; width: 100%; height: 100%; border: 0; background: none; padding-left: 4px; }
.sel::after { content: ""; position: absolute; right: 5px; top: 50%; margin-top: -3px; width: 12px; height: 7px; border: 2px solid; border-color: inherit; pointer-events: none; }
.aqs { border-color: var(--aqua-l) var(--aqua-d) var(--aqua-d) var(--aqua-l); }
.ys { border-color: #cccca6 #a6a680 #a6a680 #cccca6; }

/* work area */
.work { flex: 1; min-height: 0; display: flex; background: #000; }
.left { width: 147px; flex: none; background: var(--teal); border-right: 2px solid var(--teal-l); display: flex; flex-direction: column; padding-top: 3px; white-space: nowrap; }
.job { height: 19px; border: 1px solid #000; border-left: 0; background: var(--aqua); margin-right: 1px; text-indent: -2px; line-height: 19px; }
.jm { height: 28px; margin: 3px 1px 0 0; border: 1px solid #000; border-left: 0; padding: 2px 2px 2px 0; }
.jm .btn { border-left: 0; justify-content: flex-start; padding-left: 2px; }
.layers { margin-top: 4px; width: 119px; border: 1px solid #000; border-left: 0; border-top: 2px solid var(--teal-d); box-shadow: 2px 2px var(--teal-l); padding: 1px 2px 10px 0; display: flex; flex-direction: column; gap: 5px; font-size: 12px; }
.layers ul { list-style: none; background: #000; padding-right: 2px; }
.layers li { height: 16px; display: grid; grid-template-columns: 14px 14px 1fr; gap: 2px; padding: 1px 0 1px 1px; }
.layers i { background: #fff; display: grid; place-items: center; }
.layers i::after { content: ""; width: 10px; height: 10px; border: 2px solid #000; }
.layers i.act { background: #0010a0; }
.layers i.act::after { background: #fff; border: 0; width: 7px; height: 7px; }
.layers span { background: var(--aqua); overflow: hidden; line-height: 13px; padding-left: 1px; display: flex; justify-content: space-between; }
.layers small { font: 10px/13px "DejaVu Sans", sans-serif; }
.layers .w span { background: #fff; } .layers .g span { background: #00a37a; } .layers .o span { background: var(--amber); }
.layers .s span { background: #9ab4bc; } .layers .l span { background: #dadada; }
.blue { background: #0020ff; } .green { background: #4a9600; } .red { background: #f00; }
.selected { margin-top: auto; margin-bottom: 2px; height: 22px; border: 1px solid #000; border-left: 0; background: var(--amber); font-size: 12px; line-height: 20px; text-indent: -1px; box-shadow: 0 -3px var(--teal-l); }
.canvas { flex: 1; min-width: 0; height: 100%; display: block; }
.right { width: 164px; flex: none; border-left: 2px solid var(--teal-d); border-right: 2px solid var(--teal-l); display: flex; flex-direction: column; }
.tools { display: grid; grid-template-columns: repeat(4, 38px); gap: 2px; padding: 2px 1px; border-top: 1px solid var(--teal-d); border-bottom: 2px solid var(--teal-l); }
.tools.edit { border-color: #777; padding-top: 1px; }
.tools button { height: 38px; background: var(--aqua); border: 3px solid; border-color: var(--aqua-l) var(--aqua-d) var(--aqua-d) var(--aqua-l); display: block; padding: 1px; }
.tools svg, .ratio span { display: block; width: 30px; height: 30px; border: 1px solid #000; }
.tools .ratio { font: bold 14px/28px "Liberation Sans", sans-serif; text-align: center; }
.tools .hot { border-color: #c82020; }
.edit button { background: #ccc; border-color: #eee #888 #888 #eee; }
.edit .white { background: #fff; border-color: #fff #999 #999 #fff; }
.edit .amber { background: var(--amber); border-color: #ffe29c #b08430 #b08430 #ffe29c; }
.tiny { font: bold 6px "DejaVu Sans Mono", monospace; }
.preview { flex: 1; min-height: 0; width: 100%; display: block; }
.coords { height: 47px; background: var(--teal); border-top: 2px solid var(--teal-l); border-bottom: 2px solid var(--teal-l); padding: 8px 3px 6px; line-height: 15px; box-shadow: inset 0 2px var(--teal-d); }

/* status bar */
.status { flex: none; height: 34px; background: #000; border-top: 1px solid #000; border-bottom: 1px solid #000; display: flex; gap: 1px; font-size: 12px; }
.sb { width: 30px; border: 3px solid var(--cream); background: var(--cream); display: grid; place-items: center; box-shadow: inset 0 0 0 2px #d0d0aa; flex: none; }
.sb:first-child { width: 24px; border-left: 0; }
.sb.on { border-color: var(--teal); }
.sb svg { width: 18px; height: 20px; }
.xy { width: 47px; background: var(--cream); padding: 8px 2px; white-space: pre; }
.xyin { width: 173px; background: var(--cream); padding: 2px; display: flex; }
.xyin .field { flex: 1; }
.msg { flex: 1; background: var(--cream); padding: 8px 4px; }
.unit { width: 79px; background: var(--teal); padding: 2px 3px 2px 6px; display: flex; font-size: 15px; }
.unit .sel { flex: 1; }
.strip { height: 9px; flex: none; background: #bff; border-top: 3px solid #5c9494; }

/* floating windows */
.window { position: absolute; background: var(--teal); box-shadow: 0 0 0 1px #2a2a2a; }
.window > header { height: 30px; padding: 0 2px 1px 8px; }
.window .wi { margin-right: 5px; }

.hist { left: 167px; top: 330px; width: 332px; font-size: 12px; }
.hist > header button, .pop > header button { width: 28px; }
.layerbar { margin: 3px 3px 2px; height: 21px; background: #f00; border: 2px solid #000; line-height: 17px; padding-left: 2px; color: #500; }
.hmenu { height: 27px; border: 2px solid; border-color: var(--aqua-l) var(--aqua-d) var(--aqua-d) var(--aqua-l); background: var(--aqua); outline: 1px solid #000; outline-offset: -1px; display: flex; gap: 16px; padding: 4px 12px; }
.report { margin-top: 4px; border: 3px solid; border-color: var(--teal-d) var(--teal-l) var(--teal-l) var(--teal-d); height: 360px; padding: 1px; display: grid; grid-template: 1fr 16px / 1fr 14px; gap: 6px; }
.text { border: 2px solid; border-color: var(--teal-d) var(--teal-l) var(--teal-l) var(--teal-d); padding: 2px 0 0 7px; }
.text p { height: 13px; line-height: 13px; white-space: nowrap; }
.r { display: grid; grid-template-columns: 64px 160px 1fr; }
.vs, .hs { border: 2px solid; border-color: var(--teal-d) var(--teal-l) var(--teal-l) var(--teal-d); background: #48ab93; display: flex; }
.vs { flex-direction: column; }
.vs i, .hs i { flex: 1; background: var(--teal); border: 2px solid; border-color: var(--teal-l) var(--teal-d) var(--teal-d) var(--teal-l); }
.vs svg { width: 10px; height: 12px; } .hs svg { width: 12px; height: 100%; }
.vs path, .hs path { fill: var(--teal); stroke: var(--teal-l); }
.hbtns { display: grid; grid-template-columns: 110px 109px 113px; height: 55px; grid-template-rows: 1fr 1fr; grid-auto-flow: column; }
.hbtns .cell { grid-column: 2; }
.hbtns .upd { grid-column: 3; grid-row: 1 / 3; }
.close { height: 26px; }

.pop { left: 658px; top: 445px; width: 478px; }
.popbody { display: flex; height: 299px; }
.popcanvas { flex: 1; min-width: 0; height: 298px; background: #000; border: 3px solid; border-color: var(--teal-d) var(--teal-l) var(--teal-l) var(--teal-d); }
.poptools { width: 37px; padding: 3px 0 0 2px; display: flex; flex-direction: column; gap: 2px; background: linear-gradient(#000 0 247px, var(--teal) 247px); }
.poptools button { height: 33px; width: 34px; border: 4px solid; border-color: var(--teal-l) var(--aqua-d) var(--aqua-d) var(--teal-l); background: var(--aqua); outline: 1px solid var(--teal); outline-offset: -1px; display: grid; place-items: center; flex: none; }
.poptools svg { width: 21px; height: 21px; border: 1px solid #000; }
.pop .close { height: 27px; }

.drill { left: 1167px; top: 243px; width: 765px; }
.drill > header { color: #111; height: 31px; padding-bottom: 2px; }
.drow { display: flex; padding-right: 2px; }
.fill { flex: 1; border: 1px solid #000; }
.tail { width: 148px; flex: none; }
.drill .cell { align-items: stretch; padding: 2px; }
.drill .cell label, .board > span:last-child { align-self: center; white-space: nowrap; }
.r1 { height: 33px; } .r2 { height: 30px; }
.w168 { width: 168px; } .w109 { width: 109px; } .w109 .field, .hasl .field { flex: 1; }
.spread { justify-content: space-between; padding: 0 12px 0 2px; }
.drill .slots { width: 188px; padding-left: 8px; gap: 6px; } .slots .sel { flex: 1; }
.r1 .fill { border: 0; }
.board { width: 307px; gap: 4px; } .board .field { width: 104px; margin-left: 10px; }
.params { width: 179px; } .hasl { width: 129px; }
.tframe { position: relative; height: 461px; margin: 0 2px; border: 2px solid; border-color: var(--teal-d) var(--teal-l) var(--teal-l) var(--teal-d); overflow: hidden; }
table { table-layout: fixed; width: 757px; border-collapse: separate; border-spacing: 0; }
.c1 { width: 28px; } .c2 { width: 68px; } .c3 { width: 60px; } .c4 { width: 83px; } .c5 { width: 115px; } .c6 { width: 83px; } .c7 { width: 74px; } .c8 { width: 6px; }
th { height: 37px; padding: 0; background: #afffff; border-right: 2px solid #000; border-bottom: 2px solid #000; line-height: 15px; white-space: nowrap; }
th:first-child, td:first-child { border-left: 2px solid #000; }
th.cut { overflow: hidden; border-right: 0; text-align: left; padding-left: 2px; }
tbody::before { content: ""; display: block; height: 2px; }
td { height: 33px; padding: 1px 2px; border-right: 2px solid #000; border-bottom: 2px solid #000; vertical-align: middle; }
td:last-child { border-right: 0; }
td.n { text-align: right; }
td.w { background: #fff; } td.y { background: var(--cream); }
td.y:nth-child(5) { padding-left: 5px; }
td.w input, td.y input { display: block; width: 100%; height: 27px; border: 2px solid; padding-left: 6px; padding-bottom: 7px; }
td.w input { border-color: #999 #ccc #ccc #999; } td.y input { border-color: #99997a #cccca6 #cccca6 #99997a; }
td.foc { background: #000; } td.foc input { background-color: #fff; }
td .sel { height: 28px; }
.ti { display: block; width: 20px; height: 20px; background: #fff; fill: none; stroke: #000; margin: auto; }
.tool { width: 62px; height: 28px; display: block; text-align: left; padding-left: 3px; background: var(--teal); border: 2px solid; border-color: var(--teal-l) var(--teal-d) var(--teal-d) var(--teal-l); }
.picked { background: var(--amber); }
.arrow { position: absolute; left: 258px; top: 86px; width: 86px; height: 64px; pointer-events: none; }
.dhs { margin: 3px 2px 5px; height: 15px; }
.dhs i { margin-right: 65px; }
.r3 { height: 35px; border-top: 1px solid #000; border-bottom: 1px solid #000; align-items: stretch; }
.r3 > label { align-self: center; padding: 0 5px 0 3px; }
.r3 .cur { width: 42px; margin-right: 2px; background: var(--amber); border: 1px solid #000; font-size: 12px; display: grid; place-items: center; }
.w58 { width: 58px; } .w35 { width: 35px; } .w50 { width: 50px; } .w30 { width: 30px; } .w131 { width: 131px; } .w88 { width: 88px; } .w115 { width: 115px; }
.w88 .sel, .w115 .sel { flex: 1; } .drill .w88, .drill .w115 { padding-left: 6px; }
.idx { width: 60px; margin: 1px 3px 1px 0; border-color: var(--teal-d) var(--teal-l) var(--teal-l) var(--teal-d); }
.r3 .w30 svg { width: 16px; height: 16px; fill: none; stroke: #000; flex: none; } .r3 .rx { stroke: #e01010; stroke-width: 2; }
.r4 { height: 34px; margin-top: 4px; }
.drill .merge { width: 360px; padding-left: 11px; gap: 16px; } .merge .sel { flex: 1; }
.r5 { height: 29px; } .drill .r5 .cell { flex: 1; padding: 1px; }
```
